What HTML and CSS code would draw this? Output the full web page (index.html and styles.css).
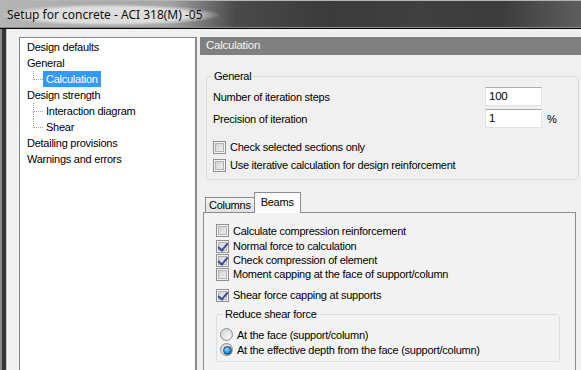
FILE: index.html
```html
<!DOCTYPE html>
<html lang="en">
<head>
  <meta charset="UTF-8">
  <title>Setup for concrete - ACI 318(M) -05</title>
  <link rel="stylesheet" href="styles.css">
</head>
<body>
  <div class="titlebar">
    <span class="title">Setup for concrete - ACI 318(M) -05</span>
  </div>
  <div class="frame">
    <div class="client">
      <div class="tree">
        <div class="node">Design defaults</div>
        <div class="node">General</div>
        <div class="children">
          <div class="child"><span class="label selected">Calculation</span></div>
        </div>
        <div class="node">Design strength</div>
        <div class="children">
          <div class="child"><span class="label">Interaction diagram</span></div>
          <div class="child"><span class="label">Shear</span></div>
        </div>
        <div class="node">Detailing provisions</div>
        <div class="node">Warnings and errors</div>
      </div>

      <div class="page">
        <div class="page-head">Calculation</div>
        <div class="page-body">
          <fieldset class="group general">
            <legend>General</legend>
            <div class="field">
              <span>Number of iteration steps</span>
              <span class="input">100</span>
              <span></span>
            </div>
            <div class="field">
              <span>Precision of iteration</span>
              <span class="input">1</span>
              <span class="unit">%</span>
            </div>
            <div class="checks">
              <div class="check"><span class="cb"></span>Check selected sections only</div>
              <div class="check"><span class="cb"></span>Use iterative calculation for design reinforcement</div>
            </div>
          </fieldset>

          <div class="tabs">
            <div class="tab-strip">
              <span class="tab">Columns</span>
              <span class="tab active">Beams</span>
            </div>
            <div class="tab-panel">
              <div class="check first"><span class="cb"></span>Calculate compression reinforcement</div>
              <div class="check"><span class="cb on"></span>Normal force to calculation</div>
              <div class="check"><span class="cb on"></span>Check compression of element</div>
              <div class="check"><span class="cb"></span>Moment capping at the face of support/column</div>
              <div class="check shear"><span class="cb on"></span>Shear force capping at supports</div>

              <fieldset class="group reduce">
                <legend>Reduce shear force</legend>
                <div class="radio"><span class="rb"></span>At the face (support/column)</div>
                <div class="radio"><span class="rb on"></span>At the effective depth from the face (support/column)</div>
              </fieldset>
            </div>
          </div>
        </div>
      </div>
    </div>
  </div>
</body>
</html>
```

FILE: styles.css
```css
* {
  box-sizing: border-box;
}

html, body {
  margin: 0;
  padding: 0;
}

body {
  width: 581px;
  height: 370px;
  overflow: hidden;
  background: #3a3a3a;
  font-family: "Liberation Sans", Arial, sans-serif;
  font-size: 11px;
  letter-spacing: -0.25px;
  color: #000;
}

/* window caption */
.titlebar {
  height: 29px;
  padding: 3px 0 0 0;
  border-top: 1px solid #b4b4b4;
  border-bottom: 1px solid #000;
  box-shadow: inset 0 -1px 0 #8a8a8a;
  background: linear-gradient(to right, #b4b4b4 0, #a4a4a4 170px, #4a4a4a 235px, #3b3b3b 330px, #404040 420px, #3c3c3c 500px, #5e5e5e 581px);
}

.title {
  display: inline-block;
  padding: 2px 18px 3px 7px;
  font-family: "Noto Sans", "Open Sans", sans-serif;
  font-size: 12px;
  letter-spacing: 0;
  color: #101010;
  background: radial-gradient(ellipse closest-side, rgba(224, 224, 224, 0.95) 72%, rgba(224, 224, 224, 0));
}

/* window frame */
.frame {
  height: 341px;
  padding-left: 6px;
  background: linear-gradient(to right, #8a8a8a 0, #8a8a8a 2px, #353535 2px);
}

.client {
  display: flex;
  gap: 3px;
  height: 100%;
  padding: 8px 0 0 12px;
  border-left: 1px solid #c9c9c9;
  background: #f0f0f0;
}

/* navigation tree */
.tree {
  width: 178px;
  flex: none;
  padding: 1px 0 0 7px;
  background: #fff;
  border: 1px solid #828790;
  border-right: 2px solid #8b8b8b;
  border-bottom: none;
}

.node,
.child {
  height: 16px;
  line-height: 16px;
  white-space: nowrap;
}

.children {
  margin-left: 6px;
}

.child {
  position: relative;
  padding-left: 10px;
}

.child::before {
  content: "";
  position: absolute;
  left: 0;
  top: 0;
  width: 9px;
  height: 8px;
  border-left: 1px dotted #a0a0a0;
  border-bottom: 1px dotted #a0a0a0;
}

.child:not(:last-child)::after {
  content: "";
  position: absolute;
  left: 0;
  top: 8px;
  bottom: 0;
  border-left: 1px dotted #a0a0a0;
}

.label {
  display: inline-block;
  padding: 0 3px;
}

.label.selected {
  background: #3399ff;
  color: #fff;
}

/* right page */
.page {
  flex: 1;
  min-width: 0;
}

.page-head {
  height: 18px;
  line-height: 17px;
  padding-left: 6px;
  background: #808080;
  color: #f4f4f4;
  font-size: 11.5px;
}

.page-body {
  padding: 0 0 0 3px;
}

.group {
  margin: 0;
  border: 1px solid #d5dfe5;
  border-radius: 3px;
}

.group legend {
  padding: 0 2px;
  line-height: 13px;
  margin-left: -1px;
}

.general {
  width: 373px;
  margin: 15px 0 0 3px;
  padding: 4px 0 5px 6px;
}

.field {
  display: grid;
  grid-template-columns: 1fr 57px 36px;
  align-items: center;
  height: 19px;
  margin-bottom: 3px;
}

.input {
  height: 19px;
  padding: 0 3px;
  line-height: 17px;
  background: #fff;
  border: 1px solid #e2e3ea;
  border-top-color: #abadb3;
  font-size: 11.5px;
}

.unit {
  padding-left: 5px;
}

.checks {
  margin-top: 10px;
}

.check,
.radio {
  display: flex;
  align-items: center;
  gap: 4px;
  height: 16px;
  white-space: nowrap;
}

.checks .check {
  height: 18px;
}

.cb {
  position: relative;
  width: 13px;
  height: 13px;
  flex: none;
  border: 1px solid #8e8f8f;
  background: linear-gradient(135deg, #cbcbcb, #f6f6f6);
  box-shadow: inset 0 0 0 1px #f4f4f4, inset 0 0 0 2px #aeb2b8;
}

.cb.on::after {
  content: "";
  position: absolute;
  left: 3px;
  top: 0;
  width: 4px;
  height: 8px;
  border: solid #3a4d95;
  border-width: 0 2px 2px 0;
  transform: rotate(40deg);
}

/* tabs */
.tabs {
  width: 373px;
  margin-top: 12px;
}

.tab-strip {
  display: flex;
  align-items: flex-end;
  height: 20px;
  padding-left: 2px;
}

.tab {
  height: 15px;
  line-height: 14px;
  padding: 0 3px;
  border: 1px solid #898c95;
  border-bottom: none;
  background: linear-gradient(#f3f3f3, #e1e1e1);
}

.tab.active {
  position: relative;
  height: 21px;
  margin-left: -1px;
  margin-bottom: -1px;
  padding: 0 6px;
  line-height: 19px;
  background: #fcfcfc;
}

.tab-panel {
  height: 160px;
  padding: 9px 0 0 12px;
  border: 1px solid #898c95;
  border-bottom: none;
  background: #f3f3f3;
}

.tab-panel .check {
  height: 14px;
}

.tab-panel .check.first {
  height: 17px;
}

.tab-panel .shear {
  margin-top: 7px;
}

.reduce {
  width: 344px;
  margin-top: 6px;
  padding: 6px 0 4px 3px;
}

.reduce legend {
  margin-left: 3px;
}

.radio {
  height: 15px;
}

.rb {
  position: relative;
  width: 13px;
  height: 13px;
  flex: none;
  border: 1px solid #8e8f8f;
  border-radius: 50%;
  background: radial-gradient(circle at 65% 70%, #f4f4f4, #cfcfcf);
}

.rb.on::after {
  content: "";
  position: absolute;
  left: 2px;
  top: 2px;
  width: 7px;
  height: 7px;
  border-radius: 50%;
  border: 1px solid #1c4a73;
  background: radial-gradient(circle at 40% 35%, #9fe0ff, #1a86cf 60%, #0f5b95);
}
```
